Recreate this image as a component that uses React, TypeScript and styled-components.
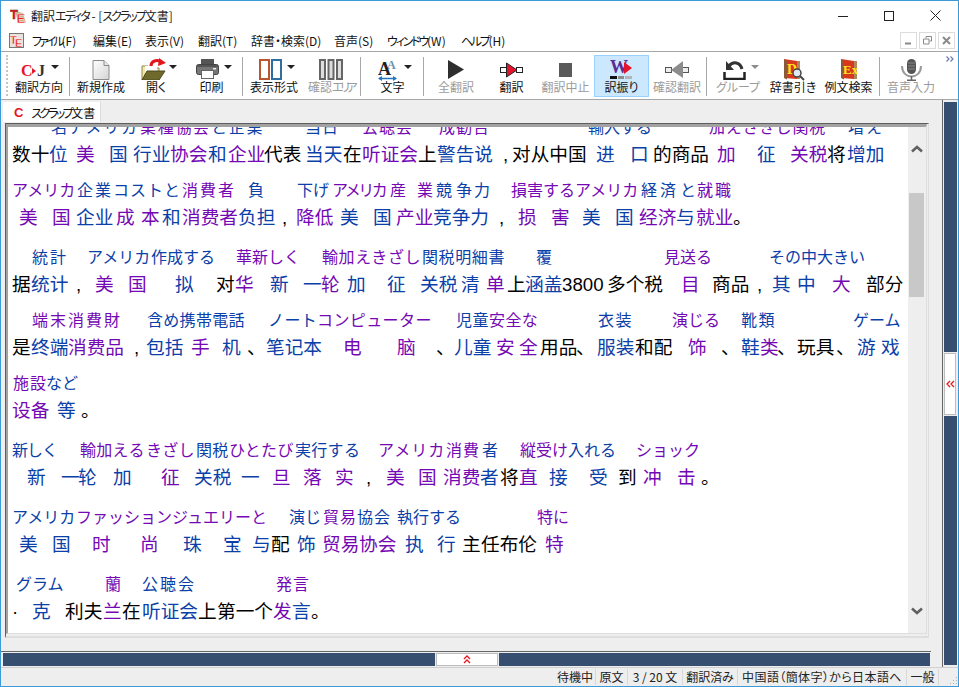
import React, { FC } from 'react'
import styled, { createGlobalStyle } from 'styled-components'

const B = 'blue'
const P = 'purple'
const K = 'black'
type Tone = 'blue' | 'purple' | 'black'
type Tok = [number, string, Tone, number?]

interface Pair {
  gap: number
  ruby: Tok[]
  zh: Tok[]
}

const pairs: Pair[] = [
  {
    gap: -15,
    ruby: [[52, '名アメリカ', B, 1.7], [141, '業種協会', P, 1.7], [212, 'と企業', B, 1.7], [306, '当日', B, 1], [363, '公聴会', P, 1], [440, '成勧告', P, 1], [589, '輸入する', B], [710, '加えさきじ関税', P, 0.7], [849, '増え', B, 2]],
    zh: [[13, '数十', K], [50, '位', B], [77, '美', P], [110, '国', B], [134, '行业', B], [171, '协会', P], [209, '和', B], [229, '企业', P], [265, '代表', K], [306, '当天', B], [344, '在', K], [363, '听证会', P], [419, '上', K], [438, '警告说', B], [504, ',', K], [513, '对从中国', K], [597, '进', B], [631, '口', B], [654, '的商品', K], [718, '加', P], [758, '征', B], [791, '关税', P], [828, '将', K], [848, '增加', B]],
  },
  {
    gap: 7,
    ruby: [[13, 'アメリカ', P], [78, '企業', B, 2], [114, 'コスト', B, 1], [165, 'と', B], [183, '消費者', P, 2], [249, '負', B], [298, '下げ', B], [333, 'アメリカ', P, -2.5], [391, '産', P], [418, '業', P], [437, '競争', B, 4], [475, '力', B], [512, '損害', P], [544, 'するアメリカ', P], [642, '経済', B, 3], [681, 'と', B], [698, '就職', P, 2]],
    zh: [[20, '美', P], [53, '国', P], [77, '企业', B], [117, '成', P], [142, '本', P], [163, '和', B], [183, '消费者', P], [239, '负担', B], [283, ',', K], [297, '降低', P], [341, '美', B], [374, '国', B], [397, '产业', P], [434, '竞争力', B], [500, ',', K], [519, '损', P], [552, '害', P], [583, '美', B], [616, '国', B], [640, '经济', P], [677, '与', B], [697, '就业', P], [734, '。', K]],
  },
  {
    gap: 11,
    ruby: [[33, '統計', B, 2], [88, 'アメリカ', B], [152, '作成する', B], [237, '華新しく', P], [323, '輸加えきざし', P, 0.6], [423, '関税明細書', B, 0.6], [537, '覆', B], [665, '見送る', P], [770, 'その中大きい', B]],
    zh: [[13, '据', K], [32, '统计', B], [77, ',', K], [96, '美', P], [129, '国', P], [176, '拟', B], [217, '对', K], [236, '华', P], [271, '新', B], [304, '一', B], [322, '轮', P], [348, '加', B], [388, '征', B], [421, '关税', B], [462, '清', B], [487, '单', P], [508, '上', K], [526, '涵盖', B], [563, '3800', K], [608, '多个税', K], [682, '目', P], [713, '商品', K], [758, ',', K], [773, '其', B], [798, '中', B], [833, '大', P], [867, '部分', K]],
  },
  {
    gap: 7,
    ruby: [[33, '端末消費財', P, 2], [148, '含め携帯電話', B, 0.3], [269, 'ノート', B, 0.4], [318, 'コンピューター', P, 0.4], [457, '児童', B, 0.4], [490, '安全な', P, 0.4], [599, '衣装', B, 1.5], [673, '演じる', P], [742, '靴類', B, 1.5], [854, 'ゲーム', B]],
    zh: [[13, '是', K], [32, '终端', B], [69, '消费品', P], [135, ',', K], [147, '包括', B], [192, '手', P], [223, '机', B], [248, '、', K], [267, '笔记本', B], [344, '电', P], [398, '脑', P], [437, '、', K], [455, '儿童', B], [497, '安', P], [520, '全', P], [541, '用品', K], [577, '、', K], [598, '服装', B], [636, '和配', K], [689, '饰', P], [722, '、', K], [742, '鞋', B], [761, '类', P], [778, '、', K], [798, '玩具', K], [837, '、', K], [858, '游', B], [882, '戏', B]],
  },
  {
    gap: 7,
    ruby: [[14, '施設', P, 1], [47, 'など', B]],
    zh: [[13, '设备', P], [58, '等', B], [82, '。', K]],
  },
  {
    gap: 11,
    ruby: [[13, '新しく', B, -1], [81, '輸加える', P, 0.3], [147, 'きざし', P, 0.3], [197, '関税', B, 0.3], [230, 'ひとたび', P, 0.3], [296, '実行する', B, 0.3], [379, 'アメリカ', P, 1], [447, '消費', P, 1], [483, '者', B], [521, '縦受け', P], [569, '入れる', B], [637, 'ショック', P]],
    zh: [[28, '新', B], [62, '一', B], [79, '轮', B], [114, '加', B], [162, '征', P], [195, '关税', B], [242, '一', B], [273, '旦', P], [304, '落', P], [336, '实', P], [367, ',', K], [387, '美', P], [419, '国', P], [444, '消费', P], [481, '者', B], [501, '将', K], [520, '直', P], [550, '接', B], [590, '受', B], [619, '到', K], [644, '冲', P], [678, '击', P], [702, '。', K]],
  },
  {
    gap: 11,
    ruby: [[13, 'アメリカ', B], [77, 'ファッション', P], [173, 'ジュエリーと', P], [290, '演じ', B], [324, '貿易', P, 1], [358, '協会', B, 1], [398, '執行する', B], [538, '特に', P]],
    zh: [[20, '美', B], [53, '国', B], [93, '时', P], [141, '尚', P], [184, '珠', B], [224, '宝', B], [253, '与', B], [272, '配', K], [298, '饰', B], [323, '贸易', P], [360, '协会', P], [406, '执', B], [438, '行', B], [463, '主', K], [482, '任布伦', K], [546, '特', P]],
  },
  {
    gap: 11,
    ruby: [[17, 'グラム', B], [106, '蘭', P], [143, '公聴会', B, 2], [277, '発言', P, 1]],
    zh: [[13, '·', K], [33, '克', B], [66, '利夫', K], [104, '兰', P], [123, '在', K], [143, '听证会', B], [199, '上', K], [218, '第一个', K], [274, '发', P], [293, '言', B], [312, '。', K]],
  },
]

const GlobalStyle = createGlobalStyle`
  html, body { margin: 0; padding: 0; background: #fff; }
`

const Window = styled.div`
  box-sizing: border-box;
  width: 959px;
  height: 687px;
  border: 1px solid #3c9ad6;
  background: #eeeeee;
  display: flex;
  flex-direction: column;
  overflow: hidden;
  font-family: "Noto Sans CJK JP", "Liberation Sans", sans-serif;
  font-size: 12px;
  color: #111;
  font-feature-settings: "palt";
`

const Kana = styled.span<{ $ls: number }>`
  letter-spacing: ${p => p.$ls}px;
`

const TitleBar = styled.div`
  height: 29px;
  background: #fff;
  display: flex;
  align-items: center;
  padding-left: 9px;
  flex: none;
`

const TitleText = styled.span`
  margin-left: 5px;
  color: #222;
  white-space: nowrap;
`

const WinButtons = styled.div`
  margin-left: auto;
  display: flex;
  height: 100%;
`

const WinButton = styled.div`
  width: 46px;
  display: flex;
  align-items: center;
  justify-content: center;
`

const MenuBar = styled.div`
  height: 21px;
  background: #fff;
  display: flex;
  align-items: center;
  padding-left: 8px;
  flex: none;
`

const MenuIcon = styled.div`
  box-sizing: border-box;
  width: 15px;
  height: 15px;
  border: 1px solid #777;
  background: #e6e2dc;
  display: flex;
  margin-right: 8px;
`

const MenuItem = styled.span<{ $w: number }>`
  width: ${p => p.$w}px;
  flex: none;
  white-space: nowrap;
`

const MdiGroup = styled.div`
  margin-left: auto;
  display: flex;
  gap: 2px;
  padding-right: 3px;
`

const MdiButton = styled.div`
  box-sizing: border-box;
  width: 17px;
  height: 17px;
  border: 1px solid #dcdcdc;
  display: flex;
  align-items: center;
  justify-content: center;
`

const Toolbar = styled.div`
  box-sizing: border-box;
  height: 49px;
  flex: none;
  background: #fff;
  border-top: 1px solid #a6a6a6;
  border-bottom: 1px solid #a6a6a6;
  display: flex;
  align-items: flex-start;
  padding: 3px 0 0 5px;
  position: relative;
`

const Gripper = styled.div`
  width: 0;
  height: 41px;
  border-left: 2px dotted #c4c4c4;
  margin-right: 2px;
`

const Tool = styled.div<{ $w: number; $active?: boolean; $off?: boolean }>`
  box-sizing: border-box;
  width: ${p => p.$w}px;
  height: 42px;
  flex: none;
  display: flex;
  flex-direction: column;
  align-items: center;
  border: 1px solid ${p => (p.$active ? '#99d1ff' : 'transparent')};
  background: ${p => (p.$active ? '#cce8ff' : 'transparent')};
  color: ${p => (p.$off ? '#9c9c9c' : '#111')};
`

const ToolIcon = styled.div<{ $gap?: number; $nudge?: number }>`
  height: 22px;
  margin-top: 2px;
  margin-left: ${p => p.$nudge ?? 0}px;
  display: flex;
  align-items: flex-start;
  gap: ${p => p.$gap ?? 5}px;
`

const ToolLabel = styled.span`
  line-height: 14px;
  white-space: nowrap;
`

const Caret = styled.i<{ $off?: boolean }>`
  display: block;
  width: 0;
  height: 0;
  margin-top: 7px;
  border-left: 4px solid transparent;
  border-right: 4px solid transparent;
  border-top: 4px solid ${p => (p.$off ? '#8c8c8c' : '#222')};
`

const Sep = styled.div`
  width: 1px;
  height: 39px;
  flex: none;
  margin: 2px 2px 0 1px;
  background: #a8a8a8;
`

const More = styled.div`
  position: absolute;
  left: 945px;
  top: 4px;
  display: flex;
`

const Main = styled.div`
  height: 567px;
  flex: none;
  display: flex;
`

const LeftColumn = styled.div`
  width: 930px;
  flex: none;
  display: flex;
  flex-direction: column;
`

const TabStrip = styled.div`
  height: 23px;
  flex: none;
  padding: 2px 0 0 2px;
  box-sizing: border-box;
`

const Tab = styled.div`
  box-sizing: border-box;
  width: 98px;
  height: 20px;
  background: #fff;
  border-right: 1px solid #dcdcdc;
  display: flex;
  align-items: center;
  padding-left: 11px;
  gap: 8px;
  white-space: nowrap;
`

const TabMark = styled.span`
  font-family: "Liberation Sans", sans-serif;
  font-weight: 700;
  font-size: 13px;
  color: #e8141c;
`

const EditorOuter = styled.div`
  box-sizing: border-box;
  height: 515px;
  flex: none;
  margin: 0 2px 0 4px;
  border-top: 1px solid #5e5e5e;
  border-left: 1px solid #5e5e5e;
  border-right: 1px solid #dedede;
  border-bottom: 2px solid #dedede;
  display: flex;
`

const EditorInner = styled.div`
  box-sizing: border-box;
  flex: 1;
  min-width: 0;
  margin: 0 1px 2px 0;
  border-top: 3px solid #a2a2a2;
  border-left: 2px solid #a2a2a2;
  border-right: 1px solid #dedede;
  border-bottom: 1px solid #dedede;
  display: flex;
`

const Paper = styled.div`
  flex: 1;
  min-width: 0;
  background: #fff;
  overflow: hidden;
`

const Seg = styled.div<{ $gap: number }>`
  margin-top: ${p => p.$gap}px;
`

const TextRow = styled.div<{ $zh?: boolean }>`
  display: flex;
  height: 28px;
  line-height: ${p => (p.$zh ? '30px' : '28px')};
  white-space: pre;
  font-feature-settings: normal;
  font-size: ${p => (p.$zh ? '18.67px' : '16px')};
  font-family: ${p =>
    p.$zh
      ? '"Liberation Sans", "Noto Sans CJK SC", sans-serif'
      : '"Noto Sans CJK JP", "Liberation Sans", sans-serif'};
`

const toneColors: Record<Tone, string> = {
  blue: '#0a40a8',
  purple: '#7408b4',
  black: '#000000',
}

const Token = styled.span<{ $tone: Tone; $ls?: number }>`
  flex: none;
  color: ${p => toneColors[p.$tone]};
  letter-spacing: ${p => p.$ls ?? 0}px;
`

const Scrollbar = styled.div`
  width: 18px;
  flex: none;
  background: #eeeeee;
  display: flex;
  flex-direction: column;
`

const ScrollArrow = styled.div`
  height: 44px;
  flex: none;
  display: flex;
  align-items: center;
  justify-content: center;
`

const ScrollThumb = styled.div`
  width: 15px;
  height: 104px;
  margin: 22px 0 auto 1px;
  background: #c8c8c8;
`

const HSplit = styled.div`
  box-sizing: border-box;
  height: 16px;
  margin-top: 13px;
  flex: none;
  border-top: 1px solid #666;
  padding: 1px 1px 1px 2px;
  display: flex;
`

const NavyBar = styled.div`
  flex: 1;
  background: #364f70;
`

const HGrip = styled.div`
  box-sizing: border-box;
  width: 62px;
  flex: none;
  margin: 0 1px;
  background: #fff;
  border: 1px solid #bcbcbc;
  display: flex;
  align-items: center;
  justify-content: center;
`

const VSplit = styled.div`
  box-sizing: border-box;
  width: 15px;
  flex: none;
  margin-left: 11px;
  border-left: 1px solid #666;
  padding: 2px 0 2px 1px;
  display: flex;
  flex-direction: column;
`

const VGrip = styled.div`
  box-sizing: border-box;
  height: 62px;
  flex: none;
  margin: 1px 0;
  width: 12px;
  background: #fff;
  border: 1px solid #bcbcbc;
  display: flex;
  align-items: center;
  justify-content: center;
`

const StatusBar = styled.div`
  box-sizing: border-box;
  height: 19px;
  flex: none;
  border-top: 1px solid #cfcfcf;
  display: flex;
  justify-content: flex-end;
  align-items: stretch;
  color: #222;
`

const StatusCell = styled.div<{ $w: number }>`
  box-sizing: border-box;
  width: ${p => p.$w}px;
  flex: none;
  border-right: 1px solid #d8d8d8;
  margin: 1px 0;
  display: flex;
  align-items: center;
  justify-content: center;
  white-space: nowrap;
  line-height: 16px;
`

const StatusGrip = styled.div`
  width: 19px;
  flex: none;
  display: flex;
  align-items: flex-end;
  justify-content: flex-end;
`

const Logo: FC = () => (
  <svg width="16" height="16" viewBox="0 0 16 16">
    <path d="M5 3 13 5 16 15 8 14Z" fill="#c9b48c" />
    <text x="0" y="11" fontFamily="Liberation Sans" fontWeight="700" fontSize="13" fill="#e4211c" stroke="#7a1a16" strokeWidth=".4">T</text>
    <text x="6.500" y="15" fontFamily="Liberation Sans" fontWeight="700" fontSize="13" fill="#e4211c" stroke="#fff" strokeWidth=".4">E</text>
  </svg>
)

const MiniLogo: FC = () => (
  <svg width="13" height="13" viewBox="0 0 13 13">
    <text x="0" y="10" fontFamily="Liberation Sans" fontWeight="700" fontSize="11" fill="#e4211c" stroke="#fff" strokeWidth=".3">T</text>
    <text x="5" y="13" fontFamily="Liberation Sans" fontWeight="700" fontSize="11" fill="#e4211c" stroke="#fff" strokeWidth=".3">E</text>
  </svg>
)

const CjIcon: FC = () => (
  <svg width="25" height="22" viewBox="0 0 25 22">
    <text x="0" y="18" fontFamily="Liberation Serif" fontWeight="700" fontSize="16" fill="#e4142c">C</text>
    <path d="M11 10 15 13 11 16Z" fill="#e4142c" />
    <text x="16" y="18" fontFamily="Liberation Serif" fontWeight="700" fontSize="16" fill="#333">J</text>
  </svg>
)

const NewDocIcon: FC = () => (
  <svg width="18" height="22" viewBox="0 0 18 22">
    <defs>
      <linearGradient id="doc" x1="0" y1="0" x2="1" y2="1">
        <stop offset="0" stopColor="#ffffff" />
        <stop offset="1" stopColor="#d4d4d4" />
      </linearGradient>
    </defs>
    <path d="M1 2.500H12L17 7.500V21.500H1Z" fill="url(#doc)" stroke="#8a8a8a" />
    <path d="M12 2.500V7.500H17" fill="#e8e8e8" stroke="#8a8a8a" />
  </svg>
)

const OpenIcon: FC = () => (
  <svg width="25" height="22" viewBox="0 0 25 22">
    <path d="M1 8H7L9 10H18V22H1Z" fill="#f2e6a8" stroke="#8f8450" />
    <path d="M4 8H16V17H4Z" fill="#fff" />
    <path d="M1 22 6 13H24L18 22Z" fill="#6f6a2c" stroke="#4c4820" />
    <path d="M10 8C10 3 16 1 20 4" fill="none" stroke="#e4141c" strokeWidth="3" />
    <path d="M18 0 25 5 17 8Z" fill="#e4141c" />
  </svg>
)

const PrintIcon: FC = () => (
  <svg width="23" height="22" viewBox="0 0 23 22">
    <path d="M5 1H18V7H5Z" fill="#555" />
    <rect x=".5" y="6.500" width="22" height="10" rx="2" fill="#777" stroke="#444" />
    <rect x="1" y="7" width="21" height="2" fill="#555" />
    <rect x="17" y="10" width="3" height="1.500" fill="#eee" />
    <rect x="5.500" y="12.500" width="12" height="8" fill="#fff" stroke="#666" />
  </svg>
)

const PanesIcon: FC = () => (
  <svg width="23" height="22" viewBox="0 0 23 22">
    <rect x="1" y="2" width="9" height="19" fill="#fff" stroke="#b9552f" strokeWidth="2" />
    <rect x="13" y="2" width="9" height="19" fill="#fff" stroke="#2f6f9f" strokeWidth="2" />
  </svg>
)

const AreaIcon: FC = () => (
  <svg width="24" height="22" viewBox="0 0 24 22">
    <rect x="1" y="2" width="5" height="19" fill="#ddd" stroke="#666" strokeWidth="2" />
    <rect x="9.500" y="2" width="5" height="19" fill="#ddd" stroke="#666" strokeWidth="2" />
    <rect x="18" y="2" width="5" height="19" fill="#ddd" stroke="#666" strokeWidth="2" />
  </svg>
)

const FontIcon: FC = () => (
  <svg width="20" height="23" viewBox="0 0 20 23">
    <text x="9" y="11" fontFamily="Liberation Serif" fontWeight="700" fontSize="12" fill="#6f93ad">A</text>
    <text x="0" y="17" fontFamily="Liberation Serif" fontWeight="700" fontSize="18" fill="#222">A</text>
    <path d="M1 20.500H18" stroke="#1f78bd" strokeWidth="1.500" />
    <path d="M0 20.500 4 18V23ZM19 20.500 15 18V23Z" fill="#1f78bd" />
  </svg>
)

const PlayIcon: FC = () => (
  <svg width="18" height="22" viewBox="0 0 18 22">
    <path d="M1 2 17 11.500 1 21Z" fill="#2e2e2e" />
  </svg>
)

const TranslateIcon: FC = () => (
  <svg width="23" height="22" viewBox="0 0 23 22">
    <rect x=".5" y="9.500" width="6" height="5" fill="#fff" stroke="#222" />
    <rect x="16.500" y="9.500" width="6" height="5" fill="#fff" stroke="#222" />
    <path d="M6.500 5 17 12 6.500 19Z" fill="#e4142c" stroke="#222" />
  </svg>
)

const StopIcon: FC = () => (
  <svg width="15" height="22" viewBox="0 0 15 22">
    <rect x="1" y="5" width="13" height="14" fill="#5a5a5a" />
  </svg>
)

const RubyIcon: FC = () => (
  <svg width="23" height="21" viewBox="0 0 23 21">
    <text x="0" y="15" fontFamily="Liberation Serif" fontWeight="700" fontSize="18" fill="#5c2c94">W</text>
    <path d="M14 4 22 10 14 16Z" fill="#e4142c" />
    <rect x="0" y="18" width="7" height="3" fill="#111" />
    <rect x="8" y="18" width="6" height="3" fill="#8c8c8c" />
    <rect x="15" y="18" width="7" height="3" fill="#b4b4b4" />
  </svg>
)

const ConfirmIcon: FC = () => (
  <svg width="24" height="22" viewBox="0 0 24 22">
    <rect x=".5" y="9.500" width="6" height="5" fill="#eee" stroke="#555" />
    <rect x="17.500" y="9.500" width="6" height="5" fill="#eee" stroke="#555" />
    <path d="M18 3V20L6 12Z" fill="#8c8c8c" />
  </svg>
)

const UndoIcon: FC = () => (
  <svg width="23" height="22" viewBox="0 0 23 22">
    <path d="M1.500 14V21H21.500V14" fill="none" stroke="#222" strokeWidth="2.500" />
    <path d="M6 8C10 3 17 4 19 11" fill="none" stroke="#333" strokeWidth="3" />
    <path d="M3 3 11 12H3Z" fill="#333" />
  </svg>
)

const BookBase: FC<{ mark: string; size: number; x: number }> = ({ mark, size, x }) => (
  <>
    <path d="M3 1 16 3V21L3 20Z" fill="#d8381c" />
    <path d="M3 1V20L6 21.500V3Z" fill="#8c5a38" />
    <path d="M16 3 19 3V21L16 21Z" fill="#b08860" />
    <text x={x} y="16" fontFamily="Liberation Serif" fontWeight="700" fontSize={size} fill="#ffe81c">{mark}</text>
  </>
)

const DictIcon: FC = () => (
  <svg width="24" height="23" viewBox="0 0 24 23">
    <BookBase mark="D" size={14} x={6} />
    <circle cx="16" cy="15" r="4" fill="#dfe9f2" stroke="#444" strokeWidth="1.500" />
    <path d="M19 18 23 22" stroke="#444" strokeWidth="2" />
  </svg>
)

const ExampleIcon: FC = () => (
  <svg width="21" height="23" viewBox="0 0 21 23">
    <BookBase mark="Ex" size={13} x={5} />
  </svg>
)

const MicIcon: FC = () => (
  <svg width="23" height="23" viewBox="0 0 23 23">
    <rect x="7" y="1" width="9" height="15" rx="4.500" fill="#555" />
    <path d="M8 5H15M8 8H15M8 11H15" stroke="#888" />
    <path d="M2 8C2 22 21 22 21 8" fill="none" stroke="#9a9a9a" strokeWidth="2" />
    <path d="M11.500 18V22M7 22.300H16" stroke="#666" strokeWidth="1.500" />
  </svg>
)

const Chevron: FC<{ down?: boolean }> = ({ down }) => (
  <svg width="12" height="8" viewBox="0 0 12 8">
    <path d={down ? 'M1 1.500 6 6 11 1.500' : 'M1 6.500 6 2 11 6.500'} fill="none" stroke="#606060" strokeWidth="2.500" />
  </svg>
)

const TextLine: FC<{ tokens: Tok[]; zh?: boolean }> = ({ tokens, zh }) => (
  <TextRow $zh={zh} style={{ paddingLeft: tokens[0][0] - 9 }}>
    {tokens.map((tok, i) => {
      const next = tokens[i + 1]
      return (
        <Token
          key={`${tok[0]}-${i}`}
          $tone={tok[2]}
          $ls={tok[3]}
          style={next ? { width: next[0] - tok[0] } : undefined}
        >
          {tok[1]}
        </Token>
      )
    })}
  </TextRow>
)

const App: FC = () => (
  <>
    <GlobalStyle />
    <Window>
      <TitleBar>
        <Logo />
        <TitleText>
          翻訳<Kana $ls={-2}>エディタ</Kana> - [<Kana $ls={-2}>スクラップ</Kana>文書]
        </TitleText>
        <WinButtons>
          <WinButton>
            <svg width="10" height="10" viewBox="0 0 10 10"><path d="M0 5.500H10" stroke="#222" /></svg>
          </WinButton>
          <WinButton>
            <svg width="10" height="10" viewBox="0 0 10 10"><rect x=".5" y=".5" width="9" height="9" fill="none" stroke="#222" /></svg>
          </WinButton>
          <WinButton>
            <svg width="11" height="11" viewBox="0 0 11 11"><path d="M.5.500 10.500 10.500M10.500.500.500 10.500" stroke="#222" /></svg>
          </WinButton>
        </WinButtons>
      </TitleBar>
      <MenuBar>
        <MenuIcon><MiniLogo /></MenuIcon>
        <MenuItem $w={61}><Kana $ls={-3}>ファイル</Kana>(F)</MenuItem>
        <MenuItem $w={52}>編集(E)</MenuItem>
        <MenuItem $w={53}>表示(V)</MenuItem>
        <MenuItem $w={53}>翻訳(T)</MenuItem>
        <MenuItem $w={83}>辞書・検索(D)</MenuItem>
        <MenuItem $w={53}>音声(S)</MenuItem>
        <MenuItem $w={74}><Kana $ls={-2.2}>ウィンドウ</Kana>(W)</MenuItem>
        <MenuItem $w={60}><Kana $ls={-2.3}>ヘルプ</Kana>(H)</MenuItem>
        <MdiGroup>
          <MdiButton>
            <svg width="9" height="9" viewBox="0 0 9 9"><path d="M1 7.500H7" stroke="#8a8a8a" strokeWidth="2" /></svg>
          </MdiButton>
          <MdiButton>
            <svg width="9" height="9" viewBox="0 0 9 9"><path d="M3 2V.500H8.500V5H6.500M.500 3H6V8H.500Z" fill="none" stroke="#8a8a8a" /></svg>
          </MdiButton>
          <MdiButton>
            <svg width="9" height="9" viewBox="0 0 9 9"><path d="M1 1 8 8M8 1 1 8" stroke="#8a8a8a" strokeWidth="2" /></svg>
          </MdiButton>
        </MdiGroup>
      </MenuBar>
      <Toolbar>
        <Gripper />
        <Tool $w={58}>
          <ToolIcon $nudge={1}><CjIcon /><Caret /></ToolIcon>
          <ToolLabel>翻訳方向</ToolLabel>
        </Tool>
        <Sep />
        <Tool $w={58}>
          <ToolIcon><NewDocIcon /></ToolIcon>
          <ToolLabel>新規作成</ToolLabel>
        </Tool>
        <Tool $w={52}>
          <ToolIcon $gap={3} $nudge={6}><OpenIcon /><Caret /></ToolIcon>
          <ToolLabel>開く</ToolLabel>
        </Tool>
        <Tool $w={59}>
          <ToolIcon $nudge={4}><PrintIcon /><Caret /></ToolIcon>
          <ToolLabel>印刷</ToolLabel>
        </Tool>
        <Sep />
        <Tool $w={58}>
          <ToolIcon $nudge={5}><PanesIcon /><Caret /></ToolIcon>
          <ToolLabel>表示形式</ToolLabel>
        </Tool>
        <Tool $w={56} $off>
          <ToolIcon><AreaIcon /></ToolIcon>
          <ToolLabel>確認<Kana $ls={-3.5}>エリア</Kana></ToolLabel>
        </Tool>
        <Sep />
        <Tool $w={59}>
          <ToolIcon $gap={6} $nudge={5}><FontIcon /><Caret /></ToolIcon>
          <ToolLabel>文字</ToolLabel>
        </Tool>
        <Sep />
        <Tool $w={60} $off>
          <ToolIcon><PlayIcon /></ToolIcon>
          <ToolLabel>全翻訳</ToolLabel>
        </Tool>
        <Tool $w={51}>
          <ToolIcon><TranslateIcon /></ToolIcon>
          <ToolLabel>翻訳</ToolLabel>
        </Tool>
        <Tool $w={57} $off>
          <ToolIcon><StopIcon /></ToolIcon>
          <ToolLabel>翻訳中止</ToolLabel>
        </Tool>
        <Tool $w={55} $active>
          <ToolIcon><RubyIcon /></ToolIcon>
          <ToolLabel>訳振り</ToolLabel>
        </Tool>
        <Tool $w={56} $off>
          <ToolIcon><ConfirmIcon /></ToolIcon>
          <ToolLabel>確認翻訳</ToolLabel>
        </Tool>
        <Sep />
        <Tool $w={58} $off>
          <ToolIcon $nudge={5}><UndoIcon /><Caret $off /></ToolIcon>
          <ToolLabel>グループ</ToolLabel>
        </Tool>
        <Tool $w={52}>
          <ToolIcon><DictIcon /></ToolIcon>
          <ToolLabel>辞書引き</ToolLabel>
        </Tool>
        <Tool $w={59}>
          <ToolIcon><ExampleIcon /></ToolIcon>
          <ToolLabel>例文検索</ToolLabel>
        </Tool>
        <Sep />
        <Tool $w={58} $off>
          <ToolIcon><MicIcon /></ToolIcon>
          <ToolLabel>音声入力</ToolLabel>
        </Tool>
        <More>
          <svg width="9" height="6" viewBox="0 0 9 6">
            <path d="M.500.500 3 3 .500 5.500M4.500.500 7 3 4.500 5.500" fill="none" stroke="#6a78b0" strokeWidth="1.200" />
          </svg>
        </More>
      </Toolbar>
      <Main>
        <LeftColumn>
          <TabStrip>
            <Tab>
              <TabMark>C</TabMark>
              <span><Kana $ls={-2.5}>スクラップ</Kana>文書</span>
            </Tab>
          </TabStrip>
          <EditorOuter>
            <EditorInner>
              <Paper>
                {pairs.map((pair, i) => (
                  <Seg key={i} $gap={pair.gap}>
                    <TextLine tokens={pair.ruby} />
                    <TextLine tokens={pair.zh} zh />
                  </Seg>
                ))}
              </Paper>
              <Scrollbar>
                <ScrollArrow><Chevron /></ScrollArrow>
                <ScrollThumb />
                <ScrollArrow><Chevron down /></ScrollArrow>
              </Scrollbar>
            </EditorInner>
          </EditorOuter>
          <HSplit>
            <NavyBar />
            <HGrip>
              <svg width="8" height="9" viewBox="0 0 8 9">
                <path d="M1 4 4 1 7 4M1 8 4 5 7 8" fill="none" stroke="#e8141c" strokeWidth="1.300" />
              </svg>
            </HGrip>
            <NavyBar />
          </HSplit>
        </LeftColumn>
        <VSplit>
          <NavyBar />
          <VGrip>
            <svg width="9" height="8" viewBox="0 0 9 8">
              <path d="M4 1 1 4 4 7M8 1 5 4 8 7" fill="none" stroke="#e8141c" strokeWidth="1.300" />
            </svg>
          </VGrip>
          <NavyBar />
        </VSplit>
      </Main>
      <StatusBar>
        <StatusCell $w={41}>待機中</StatusCell>
        <StatusCell $w={32}>原文</StatusCell>
        <StatusCell $w={55}>3 / 20 文</StatusCell>
        <StatusCell $w={55}>翻訳済み</StatusCell>
        <StatusCell $w={169}><Kana $ls={0.4}>中国語（簡体字）から日本語へ</Kana></StatusCell>
        <StatusCell $w={32}>一般</StatusCell>
        <StatusGrip>
          <svg width="10" height="10" viewBox="0 0 10 10">
            <path d="M8 1h1v1H8zM5 4h1v1H5zM8 4h1v1H8zM2 7h1v1H2zM5 7h1v1H5zM8 7h1v1H8z" fill="#b0b0b0" />
          </svg>
        </StatusGrip>
      </StatusBar>
    </Window>
  </>
)

export default App
